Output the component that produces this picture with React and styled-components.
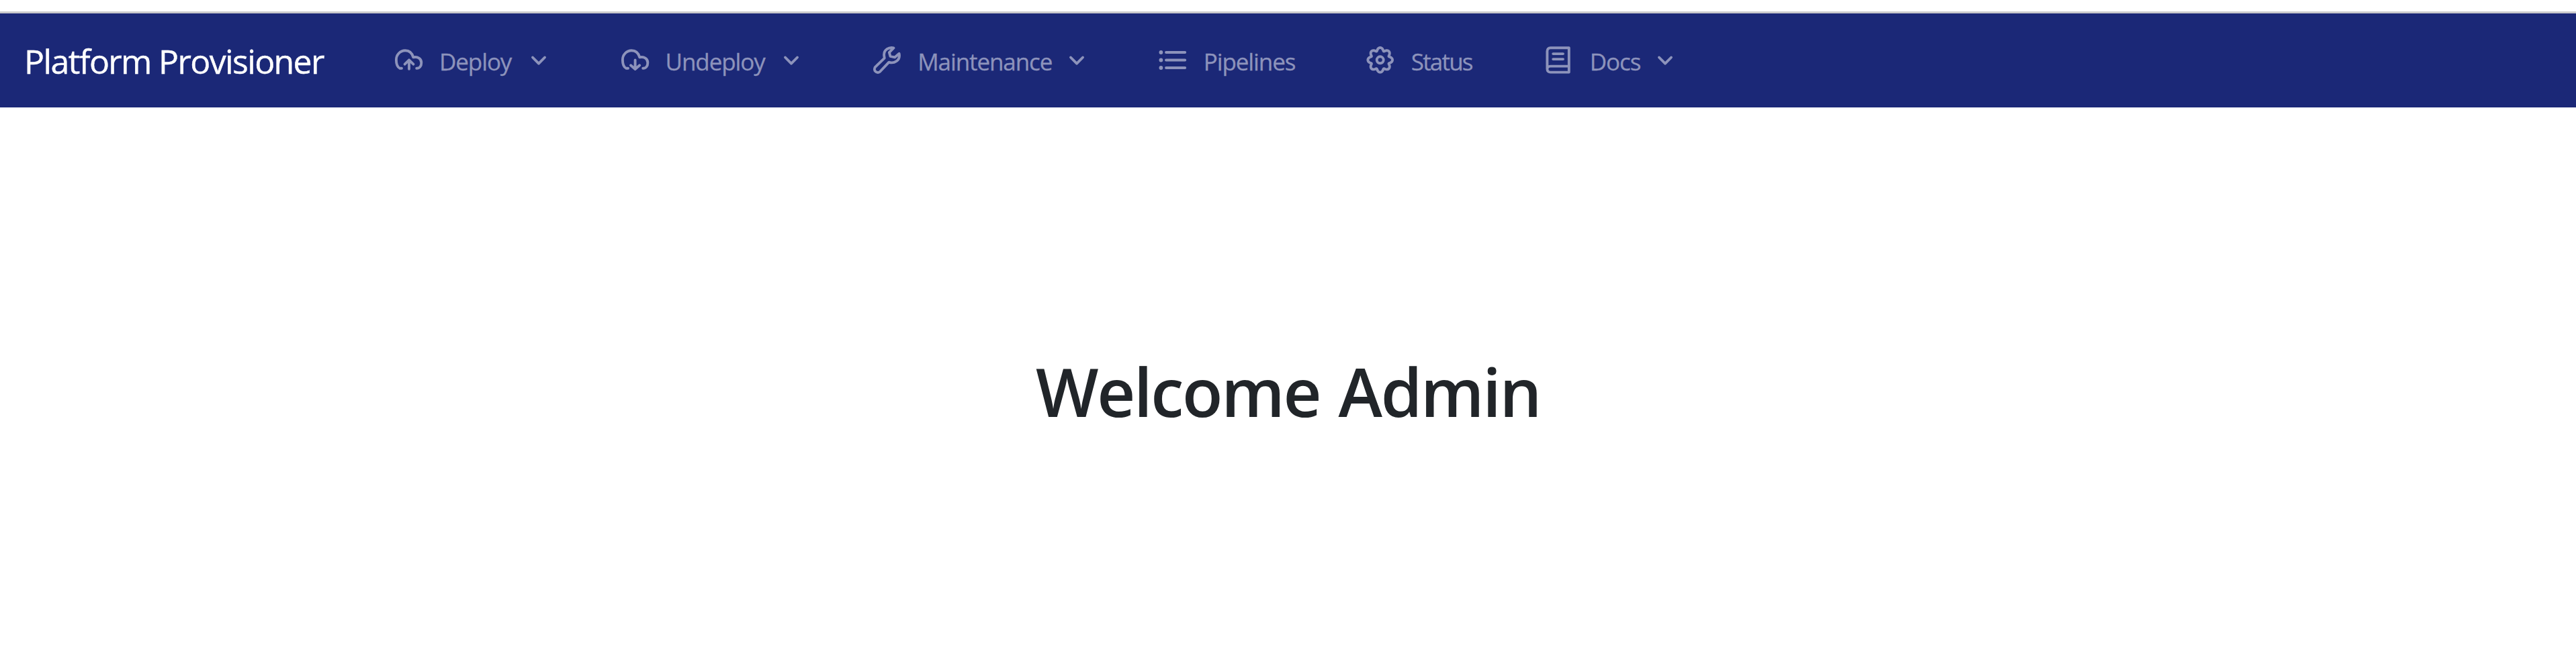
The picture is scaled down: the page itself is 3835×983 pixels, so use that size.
import React from "react";
import styled, { createGlobalStyle } from "styled-components";

const GlobalStyle = createGlobalStyle`
  * { box-sizing: border-box; }
  body {
    margin: 0;
    background: #ffffff;
    font-family: "Open Sans", "Noto Sans", sans-serif;
  }
`;

const Page = styled.div`
  min-height: 983px;
  padding-top: 17px;
  display: flex;
  flex-direction: column;
`;

const Navbar = styled.header`
  height: 143px;
  border-top: 3px solid #cacacc;
  background: #1b2877;
  display: flex;
  align-items: center;
  padding-left: 36px;
`;

const Brand = styled.a`
  width: 550px;
  padding-top: 3px;
  color: #ffffff;
  font-size: 50px;
  line-height: 75px;
  letter-spacing: -1.65px;
  -webkit-text-stroke: 0.4px currentColor;
  white-space: nowrap;
`;

const NavList = styled.nav`
  display: flex;
  align-items: center;
`;

const NavItem = styled.a`
  display: flex;
  align-items: center;
  margin-right: ${(p) => (p.$menu ? 108.6 : 103)}px;
  color: #8d93bb;
`;

const Label = styled.span`
  width: ${(p) => p.$width}px;
  margin-left: 24px;
  padding-top: 3px;
  font-size: 35px;
  line-height: 54px;
  letter-spacing: ${(p) => p.$tracking || -1.1}px;
  -webkit-text-stroke: 0.3px currentColor;
  white-space: nowrap;
`;

const IconSvg = styled.svg`
  flex: none;
  width: ${(p) => p.$size}px;
  height: ${(p) => p.$size}px;
  fill: none;
  stroke: currentColor;
  stroke-width: 3.9;
  stroke-linecap: round;
  stroke-linejoin: round;
`;

const Main = styled.main`
  flex: 1;
  display: flex;
  justify-content: center;
  padding-top: 362px;
`;

const Title = styled.h1`
  margin: 0;
  color: #212529;
  font-size: 99px;
  font-weight: 600;
  line-height: 121px;
  letter-spacing: -2.3px;
  word-spacing: 4px;
  white-space: nowrap;
`;

const CLOUD =
  "M12 34.7H9.3C5.8 33 3.9 28.4 3.9 22.4A13.6 13.6 0 0 1 17.3 8.2C23.2 8.2 27.6 12.2 29.3 18.4C36 17 41.3 20.4 41.3 26.4C41.3 31.4 38.6 34.7 34.2 34.7";

// Eight-lobed rim of the gear, sampled around its centre.
const GEAR = (() => {
  const points = [];
  for (let i = 0; i < 160; i += 1) {
    const a = (i / 160) * Math.PI * 2;
    const r = 16.1 + 2.2 * Math.cos(8 * a);
    const t = a + 0.05 * Math.sin(8 * a);
    points.push(`${(21.7 + r * Math.cos(t)).toFixed(2)} ${(22.3 + r * Math.sin(t)).toFixed(2)}`);
  }
  return `M${points.join("L")}Z`;
})();

const shapes = {
  upload: (
    <>
      <path d={CLOUD} />
      <path d="M23 35.8V23M16.6 28.6L23 22.4L29.4 28.6" />
    </>
  ),
  download: (
    <>
      <path d={CLOUD} />
      <path d="M22.6 22.5V35M16 30.2L22.6 36L29.2 30.2" />
    </>
  ),
  wrench: (
    <path d="M32.4 4.4C25 2.8 18 7.4 18.1 14.6C18.1 16.6 18.7 18.4 18.7 19.6L5.2 32.6C1.2 37.2 7 43.4 11.8 40L25.4 25.6C32.6 28 42.8 23.6 40.6 12.8L34 18.4L27.4 16.8L25.9 11.2Z" />
  ),
  list: (
    <>
      <path d="M12 11H40.2M12 22.5H40.2M12 34H40.2" />
      <path d="M4.4 11h.01M4.4 22.5h.01M4.4 34h.01" strokeWidth="5.8" />
    </>
  ),
  gear: (
    <>
      <path d={GEAR} />
      <circle cx="21.7" cy="22.3" r="5" />
    </>
  ),
  book: (
    <path d="M36.8 4.2H9.4C6.2 4.2 4.4 6.4 4.4 9.2V35.8C4.4 38.8 6.4 40.6 9.2 40.6H36.8ZM36.8 31.6H9.2C6.2 31.6 4.4 33.4 4.4 36M13.2 13.1H28M13.2 21.1H28" />
  ),
};

function Icon({ name }) {
  return (
    <IconSvg $size={44} viewBox="0 1 44 44">
      {shapes[name]}
    </IconSvg>
  );
}

function Chevron() {
  return (
    <IconSvg $size={24} viewBox="0 0 24 24">
      <path d="M3 7.5L12 16.6L21 7.5" />
    </IconSvg>
  );
}

const items = [
  { icon: "upload", text: "Deploy", width: 136, menu: true },
  { icon: "download", text: "Undeploy", width: 175, menu: true },
  { icon: "wrench", text: "Maintenance", width: 225, menu: true },
  { icon: "list", text: "Pipelines", width: 138 },
  { icon: "gear", text: "Status", width: 95, tracking: -1.8 },
  { icon: "book", text: "Docs", width: 100, menu: true },
];

export default function App() {
  return (
    <Page>
      <GlobalStyle />
      <Navbar>
        <Brand>Platform Provisioner</Brand>
        <NavList>
          {items.map((item) => (
            <NavItem key={item.text} $menu={item.menu}>
              <Icon name={item.icon} />
              <Label $width={item.width} $tracking={item.tracking}>
                {item.text}
              </Label>
              {item.menu && <Chevron />}
            </NavItem>
          ))}
        </NavList>
      </Navbar>
      <Main>
        <Title>Welcome Admin</Title>
      </Main>
    </Page>
  );
}
